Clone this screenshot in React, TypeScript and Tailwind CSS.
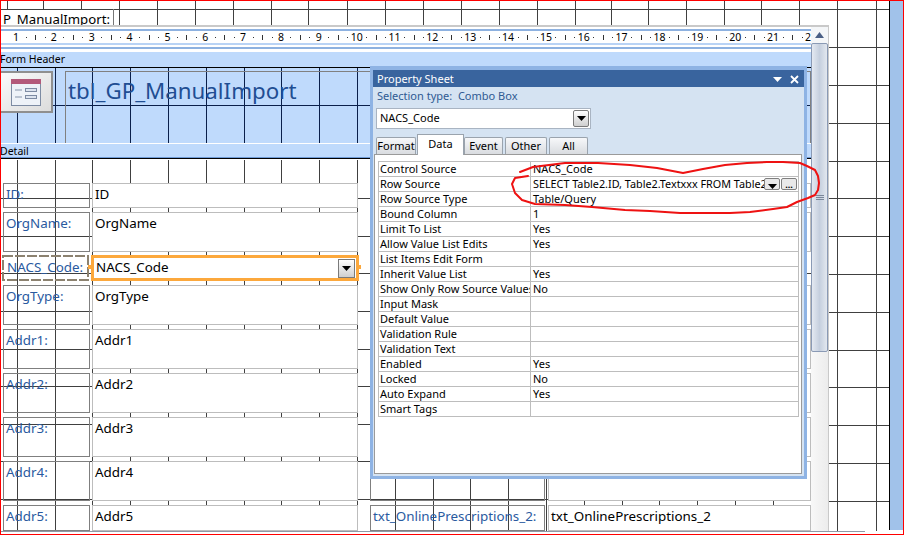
import React from "react";

const sans = "font-['Noto_Sans',sans-serif]";
const outerH = [9, 47, 85, 123, 161, 198, 236, 274, 312, 350, 387, 425, 463, 501];
const outerV = [7, 43, 81, 119, 157, 195, 233, 271, 308, 347, 385, 423, 461, 499, 537, 575, 611, 648, 686, 724, 761, 799, 837, 876];
const formV = [17, 55, 92, 130, 168, 206, 244, 281, 319, 357, 395, 433, 470, 508, 546, 584, 622, 659, 697, 735, 773];
const formH = [198, 236, 273, 311, 349, 386, 424, 461, 499];

const props: [string, string][] = [
  ["Control Source", "NACS_Code"],
  ["Row Source", "SELECT Table2.ID, Table2.Textxxx FROM Table2"],
  ["Row Source Type", "Table/Query"],
  ["Bound Column", "1"],
  ["Limit To List", "Yes"],
  ["Allow Value List Edits", "Yes"],
  ["List Items Edit Form", ""],
  ["Inherit Value List", "Yes"],
  ["Show Only Row Source Values", "No"],
  ["Input Mask", ""],
  ["Default Value", ""],
  ["Validation Rule", ""],
  ["Validation Text", ""],
  ["Enabled", "Yes"],
  ["Locked", "No"],
  ["Auto Expand", "Yes"],
  ["Smart Tags", ""],
];

const controls: { label: string; value: string; y: number; h: number }[] = [
  { label: "ID:", value: "ID", y: 183, h: 25 },
  { label: "OrgName:", value: "OrgName", y: 212, h: 40 },
  { label: "OrgType:", value: "OrgType", y: 285, h: 40 },
  { label: "Addr1:", value: "Addr1", y: 329, h: 40 },
  { label: "Addr2:", value: "Addr2", y: 373, h: 40 },
  { label: "Addr3:", value: "Addr3", y: 417, h: 40 },
  { label: "Addr4:", value: "Addr4", y: 461, h: 40 },
  { label: "Addr5:", value: "Addr5", y: 505, h: 26 },
];

function Arrow() {
  return (
    <svg width="9" height="5" viewBox="0 0 9 5">
      <path d="M0 0h9L4.500 5z" fill="#000" />
    </svg>
  );
}

function Ruler() {
  const nums = Array.from({ length: 21 }, (_, i) => i + 1);
  return (
    <div className="relative h-[12px] bg-white overflow-hidden">
      {nums.map((n) => {
        const x = 16 + (n - 1) * 37.85;
        return (
          <React.Fragment key={n}>
            <span className={`absolute top-0 w-6 text-center text-[10.500px] leading-[12px] text-black ${sans}`} style={{ left: x - 13 }}>
              {n}
            </span>
            <i className="absolute top-[6px] w-px h-px bg-[#333]" style={{ left: Math.round(x + 8.5) }} />
            <i className="absolute top-[4px] w-px h-[5px] bg-[#333]" style={{ left: Math.round(x + 18) }} />
            <i className="absolute top-[6px] w-px h-px bg-[#333]" style={{ left: Math.round(x + 27.5) }} />
          </React.Fragment>
        );
      })}
      <span className={`absolute right-0 top-0 text-[10.500px] leading-[12px] text-black ${sans}`}>2</span>
    </div>
  );
}

function Scrollbar() {
  return (
    <div className="w-[17px] flex flex-col bg-[#f0f0f0]">
      <div className="h-[16px] shrink-0 flex items-center justify-center bg-[#f4f6f8]">
        <svg width="9" height="6" viewBox="0 0 9 6">
          <path d="M4.500 0L9 6H0z" fill="#4a5f85" />
        </svg>
      </div>
      <div className="h-[309px] shrink-0 rounded-[2px] border border-[#8a9ab5] bg-gradient-to-r from-[#e4e9f1] via-[#c5cfde] to-[#e3e8ef] flex flex-col items-center pt-[151px]">
        <div className="w-[8px] flex flex-col gap-[1px]">
          <i className="h-px bg-[#7b8799]" />
          <i className="h-px bg-[#7b8799]" />
          <i className="h-px bg-[#7b8799]" />
        </div>
      </div>
      <div className="flex-1 bg-gradient-to-r from-[#f8f8f8] to-[#ececec]" />
    </div>
  );
}

function PropertySheet() {
  const tabs: [string, string][] = [
    ["Format", "w-[40px] mr-px"],
    ["Data", "w-[47px]"],
    ["Event", "w-[39px] mr-[2px]"],
    ["Other", "w-[42px] mr-[2px]"],
    ["All", "w-[39px]"],
  ];
  return (
    <div className={`absolute left-[370px] top-[66px] w-[437px] h-[413px] border-[3px] border-[#8eb3e4] flex flex-col bg-[#d5e3f2] ${sans}`}>
      <div className="h-[18px] shrink-0 border-t border-[#8eb3e4] pt-px bg-[#39649e] flex items-center justify-between pl-[4px] pr-[5px] text-white text-[11px]">
        <span>Property Sheet</span>
        <div className="flex items-center gap-[8px]">
          <svg width="9" height="5" viewBox="0 0 9 5">
            <path d="M0 0h9L4.500 5z" fill="#fff" />
          </svg>
          <svg width="9" height="9" viewBox="0 0 9 9">
            <path d="M1 1l7 7M8 1l-7 7" stroke="#fff" strokeWidth="1.800" />
          </svg>
        </div>
      </div>
      <div className="h-[17px] shrink-0 pl-[4px] text-[11px] leading-[18px] text-[#2f5a92] whitespace-nowrap">
        Selection type:&nbsp;&nbsp;Combo Box
      </div>
      <div className="mt-[4px] ml-[3px] w-[215px] h-[21px] shrink-0 bg-white border border-[#a9b4c2] flex items-center justify-between pl-[3px] pr-[1px] text-[11px] text-black">
        <span>NACS_Code</span>
        <div className="w-[16px] h-[17px] border border-[#7a7a7a] rounded-[2px] bg-gradient-to-b from-white to-[#cfcfcf] flex items-center justify-center">
          <Arrow />
        </div>
      </div>
      <div className="mt-[5px] ml-[3px] flex items-end h-[20px] shrink-0 text-[11px] text-black">
        {tabs.map(([t, w]) =>
          t === "Data" ? (
            <div key={t} className={`${w} h-[21px] bg-white border border-b-0 border-[#9aa3ad] flex items-start justify-center leading-[18px] z-10 mb-[-1px]`}>
              {t}
            </div>
          ) : (
            <div key={t} className={`${w} h-[17px] bg-gradient-to-b from-[#f7f8fa] to-[#d9dce0] border border-b-0 border-[#9aa3ad] rounded-t-[2px] flex items-center justify-center`}>
              {t}
            </div>
          )
        )}
      </div>
      <div className="flex-1 ml-[1px] mr-[2px] mb-[2px] bg-white border border-[#9a9a9a] pt-[6px] pl-[3px] pr-[2px]">
        <div className="border border-[#bdbdbd] border-b-0">
          {props.map(([k, v]) => (
            <div key={k} className="grid grid-cols-[152px_1fr] h-[15px] border-b border-[#bdbdbd] text-[11px] leading-[14px] text-black whitespace-nowrap overflow-hidden">
              <div className="pl-[1px] border-r border-[#bdbdbd] overflow-hidden">{k}</div>
              <div className="pl-[2px] relative overflow-hidden">
                {k === "Row Source" ? (
                  <div className="flex items-center justify-between pr-[1px]">
                    <span className="w-[231px] overflow-hidden text-[10.800px]">{v}</span>
                    <div className="flex gap-px">
                      <div className="w-[16px] h-[12px] border border-[#7f7f7f] rounded-[2px] bg-[#e9e9e9] flex items-end justify-center"><Arrow /></div>
                      <div className="w-[16px] h-[12px] border border-[#7f7f7f] rounded-[2px] bg-[#e9e9e9] flex items-center justify-center text-[9px] leading-[9px] font-bold">...</div>
                    </div>
                  </div>
                ) : (
                  v
                )}
              </div>
            </div>
          ))}
        </div>
      </div>
    </div>
  );
}

const scribble =
  "M520 172L533 167L565 163L598 163L630 165L657 168L683 173L703 169L725 165L747 163L767 162L783 162L800 163L807 166L815 170L818 176L819 183L818 190L815 195L808 198L797 202L787 207L773 209L750 212L730 213L680 213L650 211L625 210L592 207L565 205L535 204L522 200L515 193L512 184L515 178L528 176";

export default function App() {
  return (
    <div className="relative w-[904px] h-[535px] overflow-hidden bg-white border border-[#ff0000]">
      <div className="absolute inset-[-1px]">
        {/* outer canvas grid */}
        <svg className="absolute left-0 top-0" width="904" height="531" shapeRendering="crispEdges">
          {outerH.map((y) => (
            <line key={y} x1="0" x2="904" y1={y + 0.5} y2={y + 0.5} stroke="#404040" />
          ))}
          {outerV.map((x) => (
            <line key={x} x1={x + 0.5} x2={x + 0.5} y1="0" y2="531" stroke="#404040" />
          ))}
        </svg>
        <div className="absolute left-[889px] top-0 w-[14px] h-[530px] bg-[#a1c2ea] border-l border-black" />
        <div className="absolute left-[1px] w-[864px] top-[531px] h-px bg-[#8f98a6]" />
        <div className="absolute left-[1px] top-[10px] w-[112px] h-[15px] bg-white" />
        <div className="absolute left-[3px] top-[9px] w-[111px] h-[17px] border-r border-[#777]">
          <span className={`block text-[13.200px] leading-[21px] text-black whitespace-nowrap ${sans}`}>P_ManualImport:</span>
        </div>

        {/* form design window */}
        <div className="absolute left-[1px] top-[25px] w-[828px] h-[506px] bg-white border-t-2 border-r border-[#c9c9c9] flex">
          <div className="w-[810px] flex flex-col">
            <div className="h-[2px] mt-[2px] bg-[#8db1e0]" />
            <Ruler />
            <div className="h-[2px] bg-[#b9d3f5]" />
            <div className="h-[2px] bg-white" />
            <div className="h-[2px] bg-[#8db1e0]" />
            <div className="h-[3px] bg-white" />
            <div className={`h-[15px] bg-[#bfdafc] text-[10.500px] leading-[15px] text-black overflow-hidden whitespace-nowrap ${sans}`}>
              <span className="ml-[-1px]">Form Header</span>
            </div>
            <div className="h-px bg-black" />
            <div className="relative h-[75px] bg-[#bfdafc] overflow-hidden">
              <svg className="absolute left-[-1px] top-[-68px]" width="812" height="145" shapeRendering="crispEdges">
                {formV.map((x) => (
                  <line key={x} x1={x + 0.5} x2={x + 0.5} y1="68" y2="143" stroke="#0a1f4a" />
                ))}
                <line x1="0" x2="812" y1="105.500" y2="105.500" stroke="#0a1f4a" />
              </svg>
              <div className="absolute left-[-1px] top-[3px] w-[53px] h-[42px] bg-gradient-to-br from-[#fafafa] to-[#dcdcdc] border-r-2 border-y-2 border-[#8f8f8f] flex items-center justify-center">
                <svg width="30" height="27" viewBox="0 0 30 27">
                  <rect x="0.500" y="0.500" width="29" height="26" fill="#eef2f8" stroke="#7d8ba3" />
                  <rect x="0" y="0" width="30" height="5" fill="#b3597a" />
                  <path d="M4 11h7M4 18h7" stroke="#8694aa" />
                  <rect x="14.500" y="9.500" width="11" height="3" fill="#dde4ef" stroke="#7d8ba3" />
                  <rect x="14.500" y="16.500" width="11" height="3" fill="#dde4ef" stroke="#7d8ba3" />
                </svg>
              </div>
              <div className="absolute left-[64px] top-[3px] w-[746px] h-[72px] border-l border-t border-r border-[#808080]">
                <span className={`block pl-[2px] text-[22.300px] leading-[38px] text-[#1f4e93] whitespace-nowrap ${sans}`}>tbl_GP_ManualImport</span>
              </div>
            </div>
            <div className="h-px bg-white" />
            <div className={`h-[14px] bg-[#bfdafc] border-b border-[#6d9ad6] text-[10.500px] leading-[14px] text-black overflow-hidden whitespace-nowrap ${sans}`}>
              <span className="ml-[-1px]">Detail</span>
            </div>
            <div className="h-px bg-black" />
            <div className="h-px bg-white" />
            <div className="relative flex-1 bg-white overflow-hidden">
              <svg className="absolute left-[-1px] top-[-160px]" width="812" height="540" shapeRendering="crispEdges">
                {formV.map((x) => (
                  <line key={x} x1={x + 0.5} x2={x + 0.5} y1="160" y2="540" stroke="#404040" />
                ))}
                {formH.map((y) => (
                  <line key={y} x1="0" x2="812" y1={y + 0.5} y2={y + 0.5} stroke="#404040" />
                ))}
              </svg>
              {controls.map((c) => (
                <React.Fragment key={c.label}>
                  <div className={`absolute left-[2px] w-[87px] border border-[#7f7f7f] text-[13.400px] leading-[20px] text-[#2a5a9f] pl-[2px] ${sans}`} style={{ top: c.y - 160, height: c.h }}>
                    {c.label}
                  </div>
                  <div className={`absolute left-[91px] w-[266px] bg-white border border-[#bdbdbd] text-[13.400px] leading-[20px] text-black pl-[2px] ${sans}`} style={{ top: c.y - 160, height: c.h }}>
                    {c.value}
                  </div>
                  <div className={`absolute left-[369px] w-[175px] border border-[#7f7f7f] text-[13.400px] leading-[20px] text-[#2a5a9f] pl-[2px] whitespace-nowrap ${sans}`} style={{ top: c.y - 160, height: c.h }}>
                    {c.y === 505 ? "txt_OnlinePrescriptions_2:" : ""}
                  </div>
                  <div className={`absolute left-[547px] w-[263px] bg-white border border-[#bdbdbd] text-[13.400px] leading-[20px] text-black pl-[2px] ${sans}`} style={{ top: c.y - 160, height: c.h }}>
                    {c.y === 505 ? "txt_OnlinePrescriptions_2" : ""}
                  </div>
                </React.Fragment>
              ))}
              <div className={`absolute left-[1px] top-[95px] w-[87px] h-[26px] text-[13.400px] leading-[24px] text-[#2a5a9f] pl-[5px] ${sans}`}>
                <svg className="absolute left-0 top-0" width="87" height="26">
                  <rect x="1" y="1" width="85" height="24" fill="none" stroke="#8c8270" strokeWidth="2" strokeDasharray="10 2" />
                </svg>
                NACS_Code:
              </div>
              <div className={`absolute left-[90px] top-[95px] w-[268px] h-[26px] bg-white border-[3px] border-[#fca83c] flex items-center justify-between pl-[2px] pr-[1px] text-[13.400px] text-black ${sans}`}>
                <span className="mt-[-2px]">NACS_Code</span>
                <div className="w-[17px] h-[19px] border border-[#7a7a7a] bg-gradient-to-b from-white to-[#cfcfcf] flex items-center justify-center"><Arrow /></div>
              </div>
              <i className="absolute left-[87px] top-[105px] w-[3px] h-[4px] bg-[#fca83c]" />
              <i className="absolute left-[358px] top-[105px] w-[2px] h-[4px] bg-[#fca83c]" />
            </div>
          </div>
          <Scrollbar />
        </div>

        <PropertySheet />

        {/* red marker scribble */}
        <svg className="absolute left-0 top-0 pointer-events-none" width="904" height="535">
          <path d={scribble} fill="none" stroke="#ee1212" strokeWidth="2" strokeLinejoin="round" strokeLinecap="round" />
        </svg>
      </div>
    </div>
  );
}
